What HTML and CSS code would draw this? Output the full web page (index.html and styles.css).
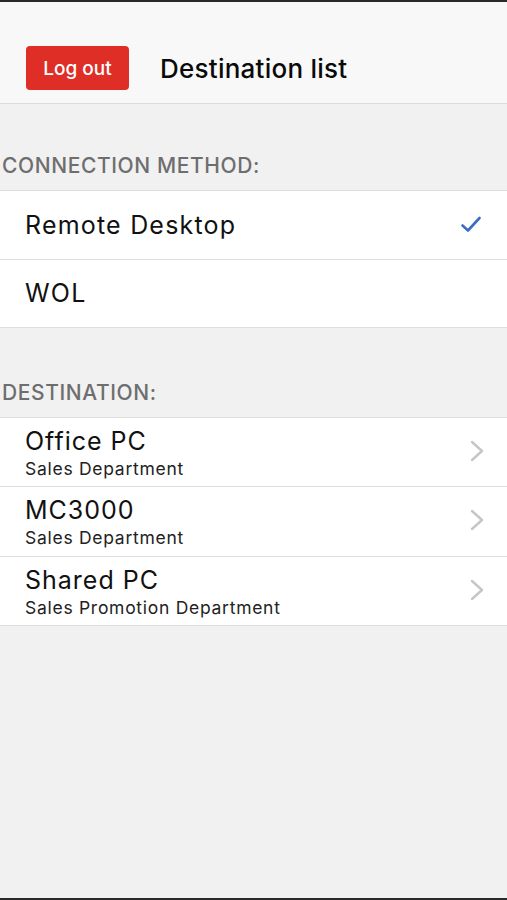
FILE: index.html
```html
<!DOCTYPE html>
<html lang="en">
<head>
<meta charset="utf-8">
<title>Destination list</title>
<link rel="stylesheet" href="styles.css">
</head>
<body>
<div class="screen">
  <header class="navbar">
    <button class="logout">Log out</button>
    <h1 class="title">Destination list</h1>
  </header>

  <div class="section-label first">CONNECTION METHOD:</div>
  <ul class="list">
    <li class="row">
      <span class="row-text">Remote Desktop</span>
      <svg class="check" width="20" height="18" viewBox="0 0 20 18"><path d="M1.5 9.5 L7 14.5 L18.5 2" fill="none" stroke="#3a6fc0" stroke-width="2.6" stroke-linecap="round" stroke-linejoin="round"/></svg>
    </li>
    <li class="row">
      <span class="row-text">WOL</span>
    </li>
  </ul>

  <div class="section-label">DESTINATION:</div>
  <ul class="list">
    <li class="row dest">
      <div class="dest-text">
        <div class="dest-name">Office PC</div>
        <div class="dest-sub">Sales Department</div>
      </div>
      <svg class="chev" width="14" height="22" viewBox="0 0 14 22"><path d="M2 2 L12 11 L2 20" fill="none" stroke="#c6c6ca" stroke-width="2.4" stroke-linecap="round" stroke-linejoin="round"/></svg>
    </li>
    <li class="row dest">
      <div class="dest-text">
        <div class="dest-name">MC3000</div>
        <div class="dest-sub">Sales Department</div>
      </div>
      <svg class="chev" width="14" height="22" viewBox="0 0 14 22"><path d="M2 2 L12 11 L2 20" fill="none" stroke="#c6c6ca" stroke-width="2.4" stroke-linecap="round" stroke-linejoin="round"/></svg>
    </li>
    <li class="row dest">
      <div class="dest-text">
        <div class="dest-name">Shared PC</div>
        <div class="dest-sub">Sales Promotion Department</div>
      </div>
      <svg class="chev" width="14" height="22" viewBox="0 0 14 22"><path d="M2 2 L12 11 L2 20" fill="none" stroke="#c6c6ca" stroke-width="2.4" stroke-linecap="round" stroke-linejoin="round"/></svg>
    </li>
  </ul>
</div>
</body>
</html>
```

FILE: styles.css
```css
* { box-sizing: border-box; }
html, body { margin: 0; padding: 0; }
body {
  background: #f2f2f2;
  font-family: Inter, "Liberation Sans", sans-serif;
  color: #111;
}
.screen {
  height: 900px;
  border-top: 2px solid #2a2a2a;
  border-bottom: 2px solid #2a2a2a;
  background: #f1f1f1;
  overflow: hidden;
}
.navbar {
  display: flex;
  align-items: center;
  height: 102px;
  padding: 44px 0 13px 26px;
  background: #f8f8f8;
  border-bottom: 1px solid #dcdcdc;
}
.logout {
  width: 103px;
  height: 44px;
  border: none;
  border-radius: 4px;
  background: #de2e26;
  color: #fff;
  font-family: Inter, "Liberation Sans", sans-serif;
  font-size: 19px;
  font-weight: 500;
  padding: 0;
}
.title {
  margin: 0 0 0 31px;
  font-size: 26px;
  font-weight: 500;
  letter-spacing: 0.25px;
  color: #0a0a0a;
}
.section-label {
  margin-top: 52px;
  padding: 0 0 11px 2px;
  font-size: 21px;
  line-height: 26px;
  font-weight: 500;
  letter-spacing: 0.6px;
  color: #6e6e6e;
}
.section-label.first { margin-top: 49px; }
.list {
  list-style: none;
  margin: 0;
  padding: 0;
  background: #fff;
  border-top: 1px solid #dedede;
}
.row {
  display: flex;
  align-items: center;
  justify-content: space-between;
  height: 68.5px;
  padding: 0 26px 0 25px;
  border-bottom: 1px solid #dedede;
}
.row-text {
  font-size: 25px;
  letter-spacing: 1.2px;
  color: #111;
}
.row.dest {
  height: 69.4px;
  align-items: flex-start;
  padding-top: 9px;
  padding-right: 23px;
}
.dest-name {
  font-size: 25px;
  line-height: 28px;
  letter-spacing: 1px;
  color: #111;
}
.dest-sub {
  margin-top: 3px;
  font-size: 17.5px;
  line-height: 22px;
  letter-spacing: 0.72px;
  color: #222;
}
.chev { margin-top: 13px; }
```
